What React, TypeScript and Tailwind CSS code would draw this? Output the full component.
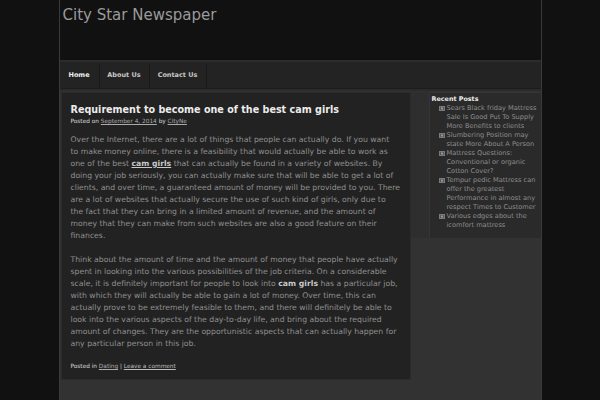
import React from "react";

const font = { fontFamily: '"DejaVu Sans", Verdana, sans-serif' };

const posts = [
  "Sears Black friday Mattress Sale Is Good Put To Supply More Benefits to clients",
  "Slumbering Position may state More About A Person",
  "Mattress Questions: Conventional or organic Cotton Cover?",
  "Tempur pedic Mattress can offer the greatest Performance in almost any respect Times to Customer",
  "Various edges about the icomfort mattress",
];

function Bullet() {
  return (
    <svg width="6" height="5" viewBox="0 0 6 5" className="mt-[2px] shrink-0">
      <rect x="0.5" y="0.5" width="5" height="4" fill="#555" stroke="#7a7a7a" strokeWidth="1" />
      <rect x="2" y="1.5" width="2" height="2" fill="#999" />
    </svg>
  );
}

export default function App() {
  return (
    <div className="min-h-[400px] w-full bg-[#111111] overflow-hidden" style={font}>
      <div className="mx-auto w-[483px] h-[400px] border-x border-[#3a3a3a] bg-[#323232] flex flex-col">
        {/* header */}
        <div className="h-[60px] bg-[#111111] pl-[3px] pt-[5px] shrink-0">
          <div className="text-[15px] leading-[20px] text-[#9a9a9a]">City Star Newspaper</div>
        </div>
        {/* nav */}
        <div className="h-[29px] shrink-0 bg-[#232323] border-t-2 border-[#2c2c2c] border-b border-b-[#1c1c1c] flex pt-[2px]">
          <div className="w-[40px] border-r border-[#1a1a1a] flex items-center justify-center text-[6.5px] font-bold text-[#f0f0f0]">Home</div>
          <div className="w-[50px] border-r border-[#1a1a1a] flex items-center justify-center text-[6.5px] font-bold text-[#c8c8c8]">About Us</div>
          <div className="w-[57px] border-r border-[#1a1a1a] flex items-center justify-center text-[6.5px] font-bold text-[#c8c8c8]">Contact Us</div>
        </div>
        <div className="h-[2px] bg-[#2b2b2b] shrink-0" />
        {/* content */}
        <div className="flex pt-[1px] pl-[1px] flex-1">
          <div className="w-[350px] h-[288px] bg-[#222222] border border-[#2b2b2b] pl-[9px] pr-[8px] pt-[10px] shrink-0">
            <h1 className="text-[9.6px] font-bold leading-[14px] text-[#ececec]">Requirement to become one of the best cam girls</h1>
            <div className="text-[5.8px] leading-[8px] text-[#d8d8d8] mt-0">
              Posted on <span className="underline text-[#aaa]">September 4, 2014</span> by <span className="underline text-[#aaa]">CityNe</span>
            </div>
            <div className="leading-[12px] text-[#8f8f8f] mt-[9px] text-[7.72px] whitespace-nowrap">
              <p>
                Over the Internet, there are a lot of things that people can actually do. If you want<br />
                to make money online, there is a feasibility that would actually be able to work as<br />
                one of the best <b className="underline text-[#c8c8c8]">cam girls</b> that can actually be found in a variety of websites. By<br />
                doing your job seriously, you can actually make sure that will be able to get a lot of<br />
                clients, and over time, a guaranteed amount of money will be provided to you. There<br />
                are a lot of websites that actually secure the use of such kind of girls, only due to<br />
                the fact that they can bring in a limited amount of revenue, and the amount of<br />
                money that they can make from such websites are also a good feature on their<br />
                finances.
              </p>
              <p className="mt-[12px]">
                Think about the amount of time and the amount of money that people have actually<br />
                spent in looking into the various possibilities of the job criteria. On a considerable<br />
                scale, it is definitely important for people to look into <b className="text-[#c8c8c8]">cam girls</b> has a particular job,<br />
                with which they will actually be able to gain a lot of money. Over time, this can<br />
                actually prove to be extremely feasible to them, and there will definitely be able to<br />
                look into the various aspects of the day-to-day life, and bring about the required<br />
                amount of changes. They are the opportunistic aspects that can actually happen for<br />
                any particular person in this job.
              </p>
            </div>
            <div className="text-[5.8px] leading-[8px] text-[#d8d8d8] mt-[12px]">
              Posted in <span className="underline text-[#aaa]">Dating</span> | <span className="underline text-[#bbb]">Leave a comment</span>
            </div>
          </div>
          <div className="w-[18px] h-[146px] bg-[#2e2e2e] shrink-0" />
          <div className="w-[112px] h-[146px] bg-[#2a2a2a] border-l border-t border-[#353535] pl-[2px] pt-[1px] shrink-0">
            <div className="text-[6.4px] font-bold leading-[10px] text-[#eeeeee]">Recent Posts</div>
            <ul className="pl-[7px] pr-[1px]">
              {posts.map((p) => (
                <li key={p} className="flex gap-[2px] text-[6.6px] leading-[9px] text-[#8e8e8e]">
                  <Bullet />
                  <span>{p}</span>
                </li>
              ))}
            </ul>
          </div>
        </div>
      </div>
    </div>
  );
}
